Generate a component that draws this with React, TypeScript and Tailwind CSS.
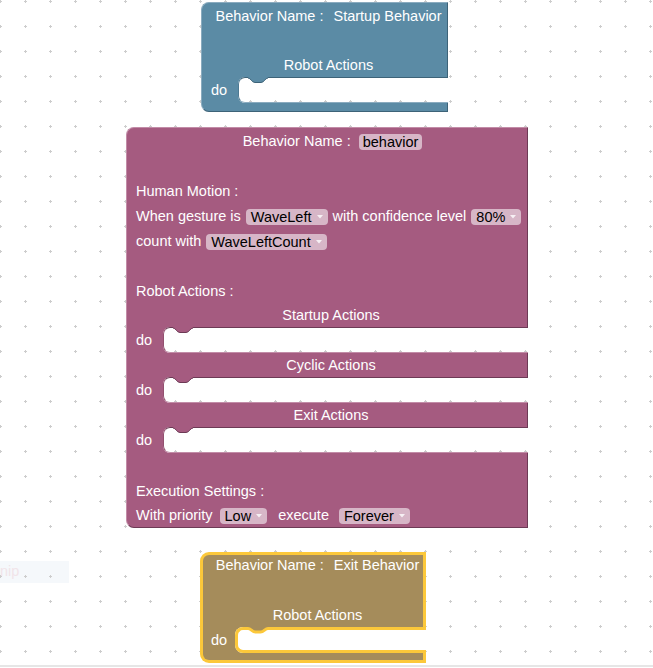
import React from "react";

// Blockly-ish workspace: three behaviour blocks on a dotted grid

type Theme = {
  fill: string;
  edge: string;
  bg: string;
  top: string;
  left: string;
  right: string;
  bottom: string;
  slot: string;
  shadow: string;
};

const blue: Theme = {
  fill: "#5b8ba5",
  edge: "#3d6378",
  bg: "bg-[#5b8ba5]",
  top: "border-t-[#8aabbf]",
  left: "border-l-[#8aabbf]",
  right: "border-r-[#3d6378]",
  bottom: "border-b-[#3d6378]",
  slot: "border-t-[#3d6378] border-l-[#4d7a93] border-b-[#8aabbf]",
  shadow: "shadow-[0_0_0_8px_#5b8ba5]",
};

const plum: Theme = {
  fill: "#a55b80",
  edge: "#6d3a55",
  bg: "bg-[#a55b80]",
  top: "border-t-[#c28ca7]",
  left: "border-l-[#c28ca7]",
  right: "border-r-[#6d3a55]",
  bottom: "border-b-[#6d3a55]",
  slot: "border-t-[#6d3a55] border-l-[#93506f] border-b-[#c28ca7]",
  shadow: "shadow-[0_0_0_8px_#a55b80]",
};

function Grid() {
  return (
    <svg className="absolute left-0 top-0" width="653" height="668">
      <defs>
        <pattern id="dots" x="-12" y="-11" width="25" height="25" patternUnits="userSpaceOnUse">
          <rect x="11" y="12" width="3" height="1" fill="#cdcdcd" />
          <rect x="12" y="11" width="1" height="3" fill="#cdcdcd" />
        </pattern>
      </defs>
      <rect width="653" height="668" fill="url(#dots)" />
    </svg>
  );
}

// the little tab that hangs into a statement slot
function Notch({ fill, edge }: { fill: string; edge: string }) {
  return (
    <svg className="absolute left-[9px] top-[-1px]" width="20" height="8" viewBox="0 0 20 8">
      <path d="M0 0 H20 V1 C17 1 16.5 5.5 13 5.5 H7 C3.5 5.5 3 1 0 1 Z" fill={fill} />
      <path d="M0 1 C3 1 3.5 5.5 7 5.5 H13 C16.5 5.5 17 1 20 1" fill="none" stroke={edge} strokeWidth={1} />
    </svg>
  );
}

function SelectedNotch({ fill, edge }: { fill: string; edge: string }) {
  return (
    <svg className="absolute left-[10px] top-[-3px]" width="20" height="10" viewBox="0 0 20 10">
      <path d="M0 0 H20 V1.5 C17 1.5 16 5 12.5 5 H7.5 C4 5 3 1.5 0 1.5 Z" fill={fill} />
      <path d="M0 1.5 C3 1.5 4 5 7.5 5 H12.5 C16 5 17 1.5 20 1.5" fill="none" stroke={edge} strokeWidth={3} />
    </svg>
  );
}

function Arrow() {
  return (
    <svg width="6" height="4" viewBox="0 0 6 4" className="shrink-0">
      <path d="M0 0 H6 L3 3.5 Z" fill="#ffffff" fillOpacity="0.8" />
    </svg>
  );
}

function Pill({ label, drop = true, className = "" }: { label: string; drop?: boolean; className?: string }) {
  return (
    <span
      className={
        (drop
          ? "inline-flex h-[16px] shrink-0 items-center gap-[5px] rounded-[4px] bg-[#d7b6c7] pl-[5px] pr-[5px] leading-[16px] text-black "
          : "inline-flex h-[16px] shrink-0 items-center rounded-[4px] bg-[#d7b6c7] px-[4px] leading-[16px] text-black ") + className
      }
    >
      {label}
      {drop && <Arrow />}
    </span>
  );
}

function Slot({ t }: { t: Theme }) {
  return (
    <div className="flex h-[26px] overflow-hidden">
      <div className={`relative z-[1] flex w-[37px] shrink-0 items-center border-l pl-[9px] pt-[2px] ${t.left} ${t.bg}`}>do</div>
      <div className={`relative flex-1 rounded-l-[7px] border-t border-b border-l ${t.slot} ${t.shadow}`}>
        <Notch fill={t.fill} edge={t.edge} />
      </div>
    </div>
  );
}

function StartupBlock() {
  const t = blue;
  return (
    <div className="absolute left-[201px] top-[2px] flex w-[247px] flex-col text-white">
      <div className={`flex h-[75px] flex-col rounded-tl-[8px] border-t border-l border-r ${t.top} ${t.left} ${t.right} ${t.bg}`}>
        <div className="flex h-[25px] items-center justify-center gap-[10px] pl-[8px] pt-[2px] whitespace-nowrap">
          <span>Behavior Name :</span>
          <span>Startup Behavior</span>
        </div>
        <div className="h-[25px]" />
        <div className="flex h-[24px] items-center justify-center pl-[8px] pt-[2px]">Robot Actions</div>
      </div>
      <Slot t={t} />
      <div className={`h-[9px] rounded-bl-[8px] border-l border-r border-b ${t.left} ${t.right} ${t.bottom} ${t.bg}`} />
    </div>
  );
}

function MainBlock() {
  const t = plum;
  const side = `border-l border-r ${t.left} ${t.right} ${t.bg}`;
  return (
    <div className="absolute left-[126px] top-[127px] flex w-[402px] flex-col text-white">
      <div className={`flex h-[200px] flex-col rounded-tl-[8px] border-t ${t.top} ${side}`}>
        <div className="flex h-[25px] items-center justify-center gap-[8px] pl-[11px] pt-[2px] whitespace-nowrap">
          <span>Behavior Name :</span>
          <Pill label="behavior" drop={false} />
        </div>
        <div className="h-[25px]" />
        <div className="flex h-[25px] items-center pl-[9px] pt-[2px]">Human Motion :</div>
        <div className="flex h-[25px] items-center gap-[5px] pl-[9px] pt-[2px] whitespace-nowrap">
          <span>When gesture is</span>
          <Pill label="WaveLeft" />
          <span>with confidence level</span>
          <Pill label="80%" />
        </div>
        <div className="flex h-[25px] items-center gap-[5px] pl-[9px] pt-[2px] whitespace-nowrap">
          <span>count with</span>
          <Pill label="WaveLeftCount" />
        </div>
        <div className="h-[25px]" />
        <div className="flex h-[25px] items-center pl-[9px] pt-[2px]">Robot Actions :</div>
        <div className="flex h-[24px] items-center justify-center pl-[8px] pt-[2px]">Startup Actions</div>
      </div>
      <Slot t={t} />
      <div className={`flex h-[24px] items-center justify-center pl-[8px] pt-[2px] ${side}`}>Cyclic Actions</div>
      <Slot t={t} />
      <div className={`flex h-[24px] items-center justify-center pl-[8px] pt-[2px] ${side}`}>Exit Actions</div>
      <Slot t={t} />
      <div className={`flex h-[75px] flex-col rounded-bl-[8px] border-b ${t.bottom} ${side}`}>
        <div className="h-[25px]" />
        <div className="flex h-[25px] items-center pl-[9px] pt-[2px]">Execution Settings :</div>
        <div className="flex h-[24px] items-center pl-[9px] pt-[2px] whitespace-nowrap">
          <span>With priority</span>
          <Pill label="Low" className="ml-[7px]" />
          <span className="ml-[11px]">execute</span>
          <Pill label="Forever" className="ml-[10px]" />
        </div>
      </div>
    </div>
  );
}

function ExitBlock() {
  return (
    <div className="absolute left-[200px] top-[552px] flex w-[226px] flex-col text-white">
      <div className="flex h-[75px] flex-col rounded-tl-[9px] border-t-[3px] border-l-[3px] border-r-[3px] border-[#fcc83a] bg-[#a58c5b]">
        <div className="flex h-[20px] items-center justify-center gap-[10px] pl-[9px] pt-[2px] whitespace-nowrap">
          <span>Behavior Name :</span>
          <span>Exit Behavior</span>
        </div>
        <div className="h-[28px]" />
        <div className="flex h-[24px] items-center justify-center pl-[9px] pt-[2px]">Robot Actions</div>
      </div>
      <div className="flex h-[26px] overflow-hidden">
        <div className="relative z-[1] flex w-[35px] shrink-0 items-center border-l-[3px] border-[#fcc83a] bg-[#a58c5b] pl-[8px] pt-[2px]">do</div>
        <div className="relative flex-1 rounded-l-[8px] border-t-[3px] border-b-[3px] border-l-[3px] border-[#fcc83a] shadow-[0_0_0_8px_#a58c5b]">
          <SelectedNotch fill="#a58c5b" edge="#fcc83a" />
        </div>
      </div>
      <div className="h-[10px] rounded-bl-[9px] border-l-[3px] border-r-[3px] border-b-[3px] border-[#fcc83a] bg-[#a58c5b]" />
    </div>
  );
}

export default function App() {
  return (
    <div className="relative h-[668px] w-[653px] overflow-hidden bg-white font-['Liberation_Sans',Arial,sans-serif] text-[14.5px]">
      <div className="absolute left-0 top-[561px] flex h-[22px] w-[69px] items-center bg-[#f5f8fb] text-[#f1e4e9]">
        nip
      </div>
      <Grid />
      <StartupBlock />
      <MainBlock />
      <ExitBlock />
      <div className="absolute left-0 top-[665px] h-[2px] w-[653px] bg-[#e6e6e6]" />
    </div>
  );
}
